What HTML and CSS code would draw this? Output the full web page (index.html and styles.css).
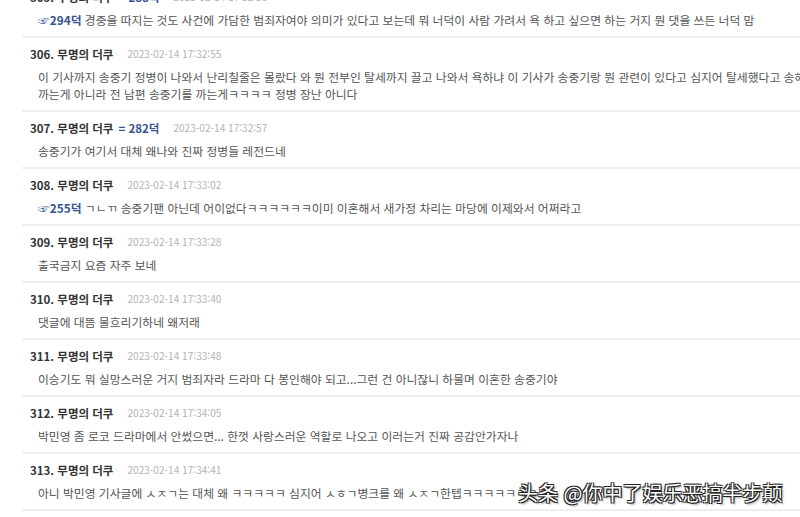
FILE: index.html
```html
<!DOCTYPE html>
<html lang="ko">
<head>
    <meta charset="UTF-8">
    <meta name="viewport" content="width=device-width, initial-scale=1.0">
    <title>댓글</title>
    <link rel="stylesheet" href="styles.css">
</head>
<body>
    <div class="thread">
        <div class="reply">
            <div class="reply-head"><span class="nick">305. 무명의 더쿠</span><span class="op">= 288덕</span><span class="date">2023-02-14 17:32:38</span></div>
            <div class="reply-body"><span class="ref">☞294덕</span> 경중을 따지는 것도 사건에 가담한 범죄자여야 의미가 있다고 보는데 뭐 너덕이 사람 가려서 욕 하고 싶으면 하는 거지 뭔 댓을 쓰든 너덕 맘</div>
        </div>
        <div class="reply">
            <div class="reply-head"><span class="nick">306. 무명의 더쿠</span><span class="date">2023-02-14 17:32:55</span></div>
            <div class="reply-body">이 기사까지 송중기 정병이 나와서 난리칠줄은 몰랐다 와 뭔 전부인 탈세까지 끌고 나와서 욕하냐 이 기사가 송중기랑 뭔 관련이 있다고 심지어 탈세했다고 송혜교<br>까는게 아니라 전 남편 송중기를 까는게ㅋㅋㅋㅋ 정병 장난 아니다</div>
        </div>
        <div class="reply">
            <div class="reply-head"><span class="nick">307. 무명의 더쿠</span><span class="op">= 282덕</span><span class="date">2023-02-14 17:32:57</span></div>
            <div class="reply-body">송중기가 여기서 대체 왜나와 진짜 정병들 레전드네</div>
        </div>
        <div class="reply">
            <div class="reply-head"><span class="nick">308. 무명의 더쿠</span><span class="date">2023-02-14 17:33:02</span></div>
            <div class="reply-body"><span class="ref">☞255덕</span> ㄱㄴㄲ 송중기팬 아닌데 어이없다ㅋㅋㅋㅋㅋㅋ이미 이혼해서 새가정 차리는 마당에 이제와서 어쩌라고</div>
        </div>
        <div class="reply">
            <div class="reply-head"><span class="nick">309. 무명의 더쿠</span><span class="date">2023-02-14 17:33:28</span></div>
            <div class="reply-body">출국금지 요즘 자주 보네</div>
        </div>
        <div class="reply">
            <div class="reply-head"><span class="nick">310. 무명의 더쿠</span><span class="date">2023-02-14 17:33:40</span></div>
            <div class="reply-body">댓글에 대뜸 물흐리기하네 왜저래</div>
        </div>
        <div class="reply">
            <div class="reply-head"><span class="nick">311. 무명의 더쿠</span><span class="date">2023-02-14 17:33:48</span></div>
            <div class="reply-body">이승기도 뭐 실망스러운 거지 범죄자라 드라마 다 봉인해야 되고...그런 건 아니잖니 하물며 이혼한 송중기야</div>
        </div>
        <div class="reply">
            <div class="reply-head"><span class="nick">312. 무명의 더쿠</span><span class="date">2023-02-14 17:34:05</span></div>
            <div class="reply-body">박민영 좀 로코 드라마에서 안썼으면... 한껏 사랑스러운 역할로 나오고 이러는거 진짜 공감안가자나</div>
        </div>
        <div class="reply">
            <div class="reply-head"><span class="nick">313. 무명의 더쿠</span><span class="date">2023-02-14 17:34:41</span></div>
            <div class="reply-body">아니 박민영 기사글에 ㅅㅈㄱ는 대체 왜 ㅋㅋㅋㅋㅋ 심지어 ㅅㅎㄱ병크를 왜 ㅅㅈㄱ한텝ㅋㅋㅋㅋㅋㅋㅋ</div>
        </div>
    </div>
    <div class="watermark">头条 @你中了娱乐恶搞半步颠</div>
</body>
</html>
```

FILE: styles.css
```css
body {
    margin: 0;
    padding: 0;
    background: #fff;
    font-family: "Noto Sans CJK KR", "Noto Sans", sans-serif;
    overflow: hidden;
    height: 517px;
    position: relative;
}

.thread {
    margin-top: -19px;
    margin-left: 22px;
    width: 900px;
}

.reply {
    padding: 7px 0 8px 8px;
    border-bottom: 2px solid #efefef;
}

.reply-head {
    display: flex;
    align-items: center;
    height: 17px;
    font-size: 11.5px;
    margin-bottom: 6px;
}

.nick {
    font-weight: bold;
    color: #333;
}

.op {
    font-weight: bold;
    color: #34558f;
    margin-left: 5px;
}

.date {
    margin-left: 14px;
    font-size: 10.1px;
    color: #b4b4b4;
}

.reply-body {
    padding-left: 8px;
    font-size: 11.8px;
    line-height: 17px;
    color: #555;
    white-space: nowrap;
}

.ref {
    font-weight: bold;
    color: #34558f;
}

.watermark {
    position: absolute;
    left: 518px;
    top: 478px;
    font-family: "Noto Sans CJK SC", sans-serif;
    font-size: 20px;
    color: #fff;
    text-shadow: 1px 1px 0 #222, -1px -1px 0 #222, 1px -1px 0 #222, -1px 1px 0 #222, 2px 2px 2px rgba(0, 0, 0, 0.4);
}
```
